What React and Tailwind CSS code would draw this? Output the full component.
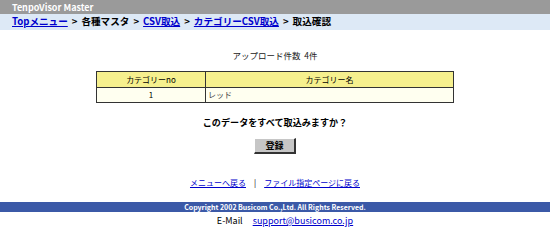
import React from "react";

const font = { fontFamily: '"Noto Sans CJK JP", "DejaVu Sans", sans-serif' };

const Crumb = ({ children }) => (
  <a className="text-[#0000cc] underline">{children}</a>
);

export default function App() {
  return (
    <div className="w-[550px] h-[233px] bg-white text-black overflow-hidden" style={font}>
      <div className="h-[14px] bg-[#9a9a9a] pl-[12px] flex items-center">
        <span className="text-white font-bold text-[9px] leading-none">TenpoVisor Master</span>
      </div>
      <div className="h-[16px] bg-[#dde9f6] pl-[12px] flex items-center gap-[4px] text-[9.6px] font-bold leading-none">
        <Crumb>Topメニュー</Crumb>
        <span>&gt;</span>
        <span>各種マスタ</span>
        <span>&gt;</span>
        <Crumb>CSV取込</Crumb>
        <span>&gt;</span>
        <Crumb>カテゴリーCSV取込</Crumb>
        <span>&gt;</span>
        <span>取込確認</span>
      </div>

      <div className="flex flex-col items-center">
        <p className="mt-[19px] text-[8.5px] leading-[12px] text-[#222]">アップロード件数&nbsp;&nbsp;4件</p>

        <table className="mt-[10px] w-[358px] border-collapse text-[8px] leading-none">
          <thead>
            <tr className="h-[16px] bg-[#f6f08e]">
              <th className="w-[109px] border border-[#333] font-normal">カテゴリーno</th>
              <th className="border border-[#333] font-normal">カテゴリー名</th>
            </tr>
          </thead>
          <tbody>
            <tr className="h-[15px] bg-[#fffff0]">
              <td className="border border-[#333] text-center">1</td>
              <td className="border border-[#333] pl-[2px] text-[#444]">レッド</td>
            </tr>
          </tbody>
        </table>

        <p className="mt-[13px] text-[9.1px] font-bold leading-[12px]">このデータをすべて取込みますか？</p>

        <button className="mt-[10px] w-[42px] h-[16px] bg-[#c6c6c6] border-r-2 border-b-2 border-[#333] border-t border-l border-t-white border-l-white text-[9px] font-bold leading-none">
          登録
        </button>

        <div className="mt-[23px] flex items-center text-[8px] leading-[12px]">
          <a className="text-[#0000cc] underline">メニューへ戻る</a>
          <span className="mx-[8px]">|</span>
          <a className="text-[#0000cc] underline">ファイル指定ページに戻る</a>
        </div>
      </div>

      <div className="mt-[13px] h-[10px] bg-[#3b59a7] flex items-center justify-center">
        <span className="text-white text-[7px] leading-none font-bold">Copyright 2002 Busicom Co.,Ltd. All Rights Reserved.</span>
      </div>
      <div className="mt-[3px] flex justify-center items-center gap-[10px] text-[9px] leading-[12px] pl-[20px]">
        <span>E-Mail</span>
        <a className="text-[#0000cc] underline">support@busicom.co.jp</a>
      </div>
    </div>
  );
}
